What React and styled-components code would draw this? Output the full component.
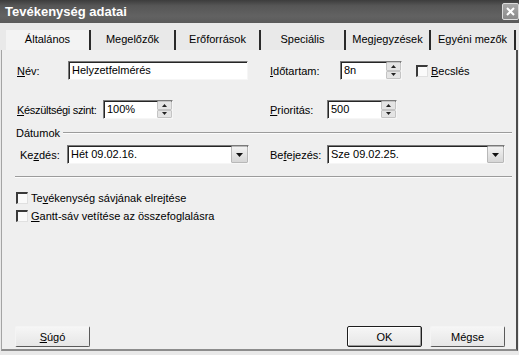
import React from 'react'
import styled, { createGlobalStyle } from 'styled-components'

const GlobalStyle = createGlobalStyle`
  html, body {
    margin: 0;
    padding: 0;
    background: #ececec;
  }
  body {
    font-family: "Liberation Sans", Arial, sans-serif;
    font-size: 11px;
    color: #000;
  }
`

const Dialog = styled.div`
  width: 519px;
  height: 355px;
  display: flex;
  flex-direction: column;
  background: #e9e9e9;
  overflow: hidden;
  box-sizing: border-box;
`

const TitleBar = styled.div`
  height: 23px;
  flex: 0 0 23px;
  display: flex;
  align-items: center;
  justify-content: space-between;
  padding-left: 5px;
  background: linear-gradient(#3c3c3c 0%, #565656 25%, #626262 70%, #5a5a5a 100%);
  color: #fff;
  font-size: 13px;
  font-weight: bold;
  box-sizing: border-box;
`

const CloseBox = styled.div`
  width: 17px;
  height: 17px;
  box-sizing: border-box;
  border: 1px solid #dcdcdc;
  border-radius: 2px;
  background: linear-gradient(#a8a8a8, #8a8a8a);
  display: flex;
  align-items: center;
  justify-content: center;
`

const TabStrip = styled.div`
  display: flex;
  height: 23px;
  margin-top: 4px;
  padding-left: 6px;
`

const Tab = styled.div`
  flex: 0 0 85px;
  height: 20px;
  margin-top: 3px;
  box-sizing: border-box;
  border-right: 2px solid #2a2a2a;
  text-align: center;
  line-height: 18px;
  white-space: nowrap;
  background: ${p => (p.$active ? '#f3f3f3' : 'transparent')};
`

const Panel = styled.div`
  flex: 1;
  margin: 0 1px 4px 1px;
  padding: 11px 0 0 15px;
  display: flex;
  flex-direction: column;
  background: #efefef;
  border-left: 1px solid #a4a4a4;
  border-right: 2px solid #4c4c4c;
  border-bottom: 2px solid #8c8c8c;
`

const FieldRow = styled.div`
  display: flex;
  align-items: center;
  height: 19px;
  margin-top: ${p => p.$top || 0}px;
`

const Cell = styled.div`
  display: flex;
  align-items: center;
  flex: 0 0 ${p => (p.$width ? `${p.$width}px` : 'auto')};
`

const Label = styled.span`
  flex: 0 0 ${p => p.$width}px;
  margin-left: ${p => p.$indent || 0}px;
  white-space: nowrap;
  letter-spacing: ${p => p.$tight ? '-0.3px' : 'normal'};
`

const Field = styled.div`
  width: ${p => p.$width}px;
  height: 19px;
  box-sizing: border-box;
  display: flex;
  align-items: stretch;
  background: #fff;
  border-top: 1px solid #7a7a7a;
  border-left: 1px solid #7a7a7a;
  border-right: 1px solid #f6f6f6;
  border-bottom: 1px solid #f6f6f6;
  box-shadow: inset 1px 1px 0 #262626;
`

const FieldText = styled.span`
  flex: 1;
  padding-left: 3px;
  line-height: 17px;
  white-space: nowrap;
`

const SpinBox = styled.div`
  flex: 0 0 15px;
  display: flex;
  flex-direction: column;
`

const SpinButton = styled.div`
  flex: 1;
  display: flex;
  align-items: center;
  justify-content: center;
  background: #e4e4e4;
  border: 1px solid #c4c4c4;
  border-radius: 1px;
`

const DropButton = styled.div`
  flex: 0 0 15px;
  display: flex;
  align-items: center;
  justify-content: center;
  background: linear-gradient(#f2f2f2, #d6d6d6);
  border: 1px solid #b8b8b8;
  border-radius: 1px;
`

const Box = styled.span`
  flex: 0 0 12px;
  width: 12px;
  height: 12px;
  box-sizing: border-box;
  background: #fafafa;
  border-top: 2px solid #3a3a3a;
  border-left: 2px solid #3a3a3a;
  border-right: 1px solid #e0e0e0;
  border-bottom: 1px solid #e0e0e0;
  margin-right: ${p => p.$gap || 3}px;
  margin-left: ${p => p.$indent || 0}px;
`

const CheckRow = styled.label`
  display: flex;
  align-items: center;
  height: 13px;
  margin-top: ${p => p.$top || 0}px;
  margin-left: -1px;
  white-space: nowrap;
`

const GroupHeader = styled.div`
  display: flex;
  align-items: center;
  height: 13px;
  margin: 7px 4px 0 -1px;
  gap: 3px;
`

const Etch = styled.div`
  flex: 1;
  height: 0;
  border-top: 1px solid #9c9c9c;
  border-bottom: 1px solid #fcfcfc;
`

const Rule = styled(Etch)`
  flex: 0 0 auto;
  margin: 12px 4px 0 -2px;
`

const Footer = styled.div`
  margin-top: auto;
  margin-bottom: 2px;
  margin-left: -2px;
  padding-right: 11px;
  display: flex;
  align-items: center;
  gap: 8px;
`

const Spacer = styled.div`
  flex: 1;
`

const Button = styled.div`
  width: 75px;
  height: 21px;
  box-sizing: border-box;
  display: flex;
  align-items: center;
  justify-content: center;
  background: linear-gradient(#f6f6f6, #e6e6e6);
  border: 1px solid;
  border-color: ${p => (p.$default ? '#1e1e1e' : '#f4f4f4 #5a5a5a #5a5a5a #f4f4f4')};
  box-shadow: ${p => (p.$default ? 'inset -1px -1px 0 #9a9a9a, inset 1px 1px 0 #fff' : 'none')};
  border-radius: 2px;
`

const Up = () => (
  <svg width="5" height="3" viewBox="0 0 5 3"><path d="M2.5 0L5 3H0z" fill="#222" /></svg>
)
const Down = () => (
  <svg width="5" height="3" viewBox="0 0 5 3"><path d="M0 0h5L2.5 3z" fill="#222" /></svg>
)
const Caret = () => (
  <svg width="7" height="4" viewBox="0 0 7 4"><path d="M0 0h7L3.5 4z" fill="#111" /></svg>
)

const Spinner = ({ width, value }) => (
  <Field $width={width}>
    <FieldText>{value}</FieldText>
    <SpinBox>
      <SpinButton><Up /></SpinButton>
      <SpinButton><Down /></SpinButton>
    </SpinBox>
  </Field>
)

const Combo = ({ width, value }) => (
  <Field $width={width}>
    <FieldText>{value}</FieldText>
    <DropButton><Caret /></DropButton>
  </Field>
)

const tabs = ['Általános', 'Megelőzők', 'Erőforrások', 'Speciális', 'Megjegyzések', 'Egyéni mezők']

export default function App() {
  return (
    <>
      <GlobalStyle />
      <Dialog>
        <TitleBar>
          <span>Tevékenység adatai</span>
          <CloseBox>
            <svg width="9" height="9" viewBox="0 0 9 9">
              <path d="M1 1l7 7M8 1L1 8" stroke="#fff" strokeWidth="2" />
            </svg>
          </CloseBox>
        </TitleBar>

        <TabStrip>
          {tabs.map((t, i) => (
            <Tab key={t} $active={i === 0}>{t}</Tab>
          ))}
        </TabStrip>

        <Panel>
          <FieldRow>
            <Cell $width={253}>
              <Label $width={51}><u>N</u>év:</Label>
              <Field $width={180}><FieldText>Helyzetfelmérés</FieldText></Field>
            </Cell>
            <Cell>
              <Label $width={70}><u>I</u>dőtartam:</Label>
              <Spinner width={62} value="8n" />
              <Box $indent={14}></Box>
              <span><u>B</u>ecslés</span>
            </Cell>
          </FieldRow>

          <FieldRow $top={20}>
            <Cell $width={253}>
              <Label $width={86} $tight><u>K</u>észültségi szint:</Label>
              <Spinner width={70} value="100%" />
            </Cell>
            <Cell>
              <Label $width={57}><u>P</u>rioritás:</Label>
              <Spinner width={70} value="500" />
            </Cell>
          </FieldRow>

          <GroupHeader>
            <span>Dátumok</span>
            <Etch />
          </GroupHeader>

          <FieldRow $top={6}>
            <Cell $width={253}>
              <Label $width={47} $indent={3}>Ke<u>z</u>dés:</Label>
              <Combo width={182} value="Hét 09.02.16." />
            </Cell>
            <Cell>
              <Label $width={57}>Be<u>f</u>ejezés:</Label>
              <Combo width={178} value="Sze 09.02.25." />
            </Cell>
          </FieldRow>

          <Rule />

          <CheckRow $top={13}>
            <Box />
            <span>Te<u>v</u>ékenység sávjának elrejtése</span>
          </CheckRow>
          <CheckRow $top={5}>
            <Box />
            <span><u>G</u>antt-sáv vetítése az összefoglalásra</span>
          </CheckRow>

          <Footer>
            <Button><span><u>S</u>úgó</span></Button>
            <Spacer />
            <Button $default>OK</Button>
            <Button>Mégse</Button>
          </Footer>
        </Panel>
      </Dialog>
    </>
  )
}
